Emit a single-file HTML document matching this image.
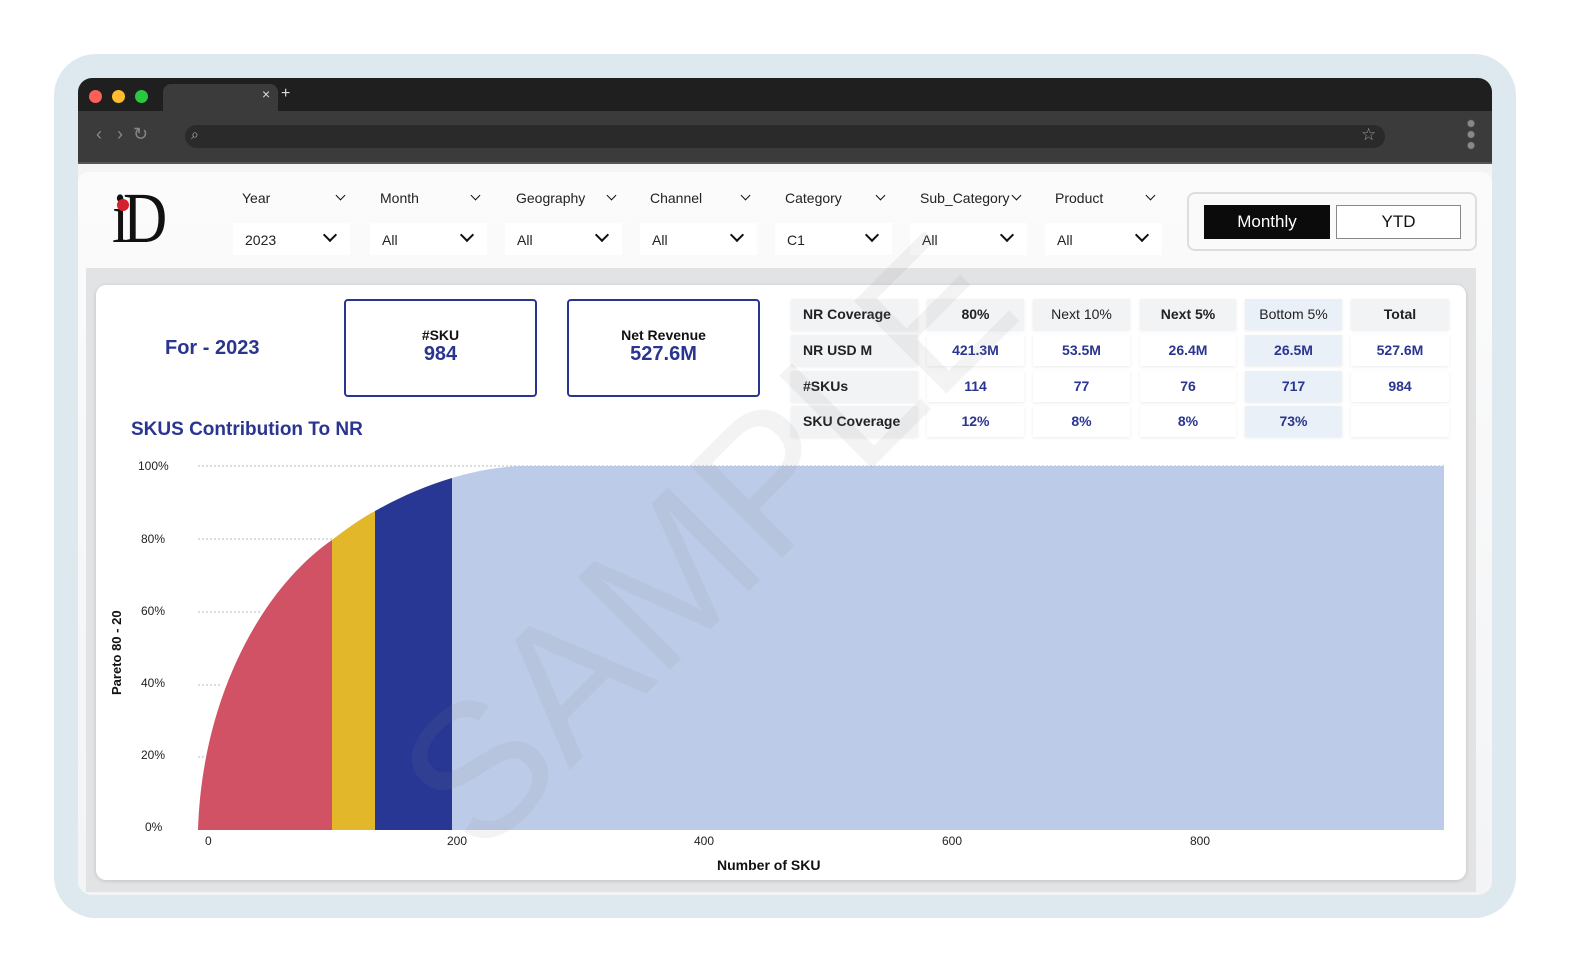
<!DOCTYPE html>
<html><head><meta charset="utf-8"><style>
*{margin:0;padding:0;box-sizing:border-box}
body{width:1570px;height:972px;background:#fff;position:relative;overflow:hidden;font-family:"Liberation Sans",sans-serif}
.a{position:absolute}
.frame{left:54px;top:54px;width:1462px;height:864px;border-radius:42px;background:#dde8ef}
.win{left:78px;top:78px;width:1414px;height:817px;border-radius:14px;background:#f4f4f4;overflow:hidden}
.dot{width:13px;height:13px;border-radius:50%;top:12px}
.lbl{font-size:14px;color:#222;top:112px}
.box{top:145px;height:32px;width:117px;background:#fff;font-size:14px;color:#222;padding:9px 0 0 12px}
.chev{position:absolute;width:10px;height:10px;border-right:2px solid #111;border-bottom:2px solid #111;transform:rotate(45deg)}
.cell{position:absolute;height:31px;background:#f2f3f5;font-size:14px;font-weight:bold;text-align:center;line-height:31px;color:#2a3590;box-shadow:0 1px 3px rgba(0,0,0,.08)}
.h{color:#222}
.bl{background:#e9f0f8}
.w{background:#fff}
</style></head><body>
<div class="a frame"></div>
<div class="a win">
  <div class="a" style="left:0;top:0;width:1414px;height:33px;background:#1f1f1f"></div>
  <div class="a dot" style="left:11px;background:#fe5f57"></div>
  <div class="a dot" style="left:34px;background:#febc2e"></div>
  <div class="a dot" style="left:57px;background:#28c840"></div>
  <div class="a" style="left:85px;top:6px;width:115px;height:27px;background:#3b3b3b;border-radius:8px 8px 0 0"></div>
  <div class="a" style="left:184px;top:8px;color:#ddd;font-size:14px">×</div>
  <div class="a" style="left:203px;top:7px;color:#ddd;font-size:16px">+</div>
  <div class="a" style="left:0;top:33px;width:1414px;height:53px;background:#3b3b3b;border-bottom:2px solid #555"></div>
  <div class="a" style="left:18px;top:46px;color:#888;font-size:18px">‹ &nbsp;&nbsp;› &nbsp;↻</div>
  <div class="a" style="left:107px;top:47px;width:1200px;height:23px;background:#2a2a2a;border-radius:12px"></div>
  <div class="a" style="left:113px;top:48px;color:#aaa;font-size:14px">⌕</div>
  <div class="a" style="left:1283px;top:47px;color:#999;font-size:17px">☆</div>
  <div class="a" style="left:1389px;top:40px;width:8px;height:32px;background:radial-gradient(circle,#888 3px,transparent 4px) 0 0/8px 11px"></div>
  <div class="a" style="left:0;top:94px;width:1414px;height:723px;background:linear-gradient(180deg,#fbfbfb,#f3f4f6);border-radius:10px 10px 0 0"></div>
  <!-- logo -->
  <div class="a" style="left:34px;top:104px;font-family:'Liberation Serif',serif;font-size:72px;line-height:72px;color:#111;letter-spacing:-7px;transform:scaleX(0.85);transform-origin:left">iD</div>
  <div class="a" style="left:39px;top:121px;width:12px;height:12px;border-radius:50%;background:#d3212d"></div>
  <!-- filters -->
  <div class="a lbl" style="left:164px">Year</div><div class="chev" style="left:259px;top:114px;width:7px;height:7px;border-width:1.5px"></div>
  <div class="a lbl" style="left:302px">Month</div><div class="chev" style="left:394px;top:114px;width:7px;height:7px;border-width:1.5px"></div>
  <div class="a lbl" style="left:438px">Geography</div><div class="chev" style="left:530px;top:114px;width:7px;height:7px;border-width:1.5px"></div>
  <div class="a lbl" style="left:572px">Channel</div><div class="chev" style="left:664px;top:114px;width:7px;height:7px;border-width:1.5px"></div>
  <div class="a lbl" style="left:707px">Category</div><div class="chev" style="left:799px;top:114px;width:7px;height:7px;border-width:1.5px"></div>
  <div class="a lbl" style="left:842px">Sub_Category</div><div class="chev" style="left:935px;top:114px;width:7px;height:7px;border-width:1.5px"></div>
  <div class="a lbl" style="left:977px">Product</div><div class="chev" style="left:1069px;top:114px;width:7px;height:7px;border-width:1.5px"></div>
  <div class="a box" style="left:155px">2023<div class="chev" style="left:92px;top:7px"></div></div>
  <div class="a box" style="left:292px">All<div class="chev" style="left:92px;top:7px"></div></div>
  <div class="a box" style="left:427px">All<div class="chev" style="left:92px;top:7px"></div></div>
  <div class="a box" style="left:562px">All<div class="chev" style="left:92px;top:7px"></div></div>
  <div class="a box" style="left:697px">C1<div class="chev" style="left:92px;top:7px"></div></div>
  <div class="a box" style="left:832px">All<div class="chev" style="left:92px;top:7px"></div></div>
  <div class="a box" style="left:967px">All<div class="chev" style="left:92px;top:7px"></div></div>
  <div class="a" style="left:1109px;top:114px;width:290px;height:59px;border:2px solid #ddd;border-radius:8px;background:#fafafa"></div>
  <div class="a" style="left:1126px;top:127px;width:126px;height:34px;background:#0b0b0b;color:#fff;font-size:17px;text-align:center;line-height:34px">Monthly</div>
  <div class="a" style="left:1258px;top:127px;width:125px;height:34px;background:#fff;border:1.5px solid #888;color:#111;font-size:17px;text-align:center;line-height:31px">YTD</div>
  <!-- panel -->
  <div class="a" style="left:8px;top:190px;width:1390px;height:624px;background:#e2e3e5"></div>
  <div class="a" style="left:18px;top:207px;width:1370px;height:595px;background:#fff;border-radius:10px;box-shadow:0 1px 4px rgba(0,0,0,.15)"></div>
</div>
<div class="a" style="left:165px;top:337px;font-size:20px;font-weight:bold;color:#2a3590">For - 2023</div>
<div class="a" style="left:344px;top:299px;width:193px;height:98px;border:2px solid #2a3590;border-radius:4px;text-align:center"><div style="font-size:14px;font-weight:bold;margin-top:26px;color:#111">#SKU</div><div style="font-size:20px;font-weight:bold;color:#2a3590">984</div></div>
<div class="a" style="left:567px;top:299px;width:193px;height:98px;border:2px solid #2a3590;border-radius:4px;text-align:center"><div style="font-size:14px;font-weight:bold;margin-top:26px;color:#111">Net Revenue</div><div style="font-size:20px;font-weight:bold;color:#2a3590">527.6M</div></div>
<div class="a" style="left:131px;top:419px;font-size:19px;font-weight:bold;color:#2a3590">SKUS Contribution To NR</div>
<!-- table -->
<div class="cell h" style="left:791px;top:299px;width:127px;text-align:left;padding-left:12px">NR Coverage</div>
<div class="cell h" style="left:927px;top:299px;width:97px">80%</div>
<div class="cell h" style="left:1033px;top:299px;width:97px;font-weight:normal">Next 10%</div>
<div class="cell h" style="left:1140px;top:299px;width:96px">Next 5%</div>
<div class="cell h bl" style="left:1245px;top:299px;width:97px;font-weight:normal">Bottom 5%</div>
<div class="cell h" style="left:1351px;top:299px;width:98px">Total</div>
<div class="cell h" style="left:791px;top:335px;width:127px;text-align:left;padding-left:12px">NR USD M</div>
<div class="cell w" style="left:927px;top:335px;width:97px">421.3M</div>
<div class="cell w" style="left:1033px;top:335px;width:97px">53.5M</div>
<div class="cell w" style="left:1140px;top:335px;width:96px">26.4M</div>
<div class="cell bl" style="left:1245px;top:335px;width:97px">26.5M</div>
<div class="cell w" style="left:1351px;top:335px;width:98px">527.6M</div>
<div class="cell h" style="left:791px;top:371px;width:127px;text-align:left;padding-left:12px">#SKUs</div>
<div class="cell w" style="left:927px;top:371px;width:97px">114</div>
<div class="cell w" style="left:1033px;top:371px;width:97px">77</div>
<div class="cell w" style="left:1140px;top:371px;width:96px">76</div>
<div class="cell bl" style="left:1245px;top:371px;width:97px">717</div>
<div class="cell w" style="left:1351px;top:371px;width:98px">984</div>
<div class="cell h" style="left:791px;top:406px;width:127px;text-align:left;padding-left:12px">SKU Coverage</div>
<div class="cell w" style="left:927px;top:406px;width:97px">12%</div>
<div class="cell w" style="left:1033px;top:406px;width:97px">8%</div>
<div class="cell w" style="left:1140px;top:406px;width:96px">8%</div>
<div class="cell bl" style="left:1245px;top:406px;width:97px">73%</div>
<div class="cell w" style="left:1351px;top:406px;width:98px"></div>
<!-- chart -->
<svg class="a" style="left:0;top:0" width="1570" height="972">
<defs><clipPath id="c"><path d="M198,830 C202,700 260,590 332,540 C345,530 360,519 375,511 C400,497 425,486 452,478 C475,471 497,467 520,466 L1444,466 L1444,830 Z"/></clipPath></defs>
<g stroke="#bbb" stroke-dasharray="2,2" stroke-width="1">
<line x1="198" y1="466" x2="1444" y2="466"/><line x1="198" y1="539" x2="340" y2="539"/><line x1="198" y1="612" x2="260" y2="612"/><line x1="198" y1="685" x2="220" y2="685"/><line x1="198" y1="757" x2="205" y2="757"/></g>
<g clip-path="url(#c)">
<rect x="198" y="400" width="134" height="430" fill="#d05264"/>
<rect x="332" y="400" width="43" height="430" fill="#e2b72a"/>
<rect x="375" y="400" width="77" height="430" fill="#283794"/>
<rect x="452" y="400" width="992" height="430" fill="#bccbe8"/>
</g>
<g font-size="12" fill="#222" font-family="Liberation Sans">
<text x="138" y="470">100%</text><text x="141" y="543">80%</text><text x="141" y="615">60%</text><text x="141" y="687">40%</text><text x="141" y="759">20%</text><text x="145" y="831">0%</text>
<text x="205" y="845">0</text><text x="447" y="845">200</text><text x="694" y="845">400</text><text x="942" y="845">600</text><text x="1190" y="845">800</text>
</g>
<text x="717" y="870" font-size="14" font-weight="bold" fill="#111" font-family="Liberation Sans">Number of SKU</text>
<text transform="translate(121,695) rotate(-90)" font-size="13" font-weight="bold" fill="#111" font-family="Liberation Sans">Pareto 80 - 20</text>
<text transform="translate(480,860) rotate(-45)" font-size="190" fill="#888" fill-opacity="0.1" font-family="Liberation Sans">SAMPLE</text>
</svg>
</body></html>
